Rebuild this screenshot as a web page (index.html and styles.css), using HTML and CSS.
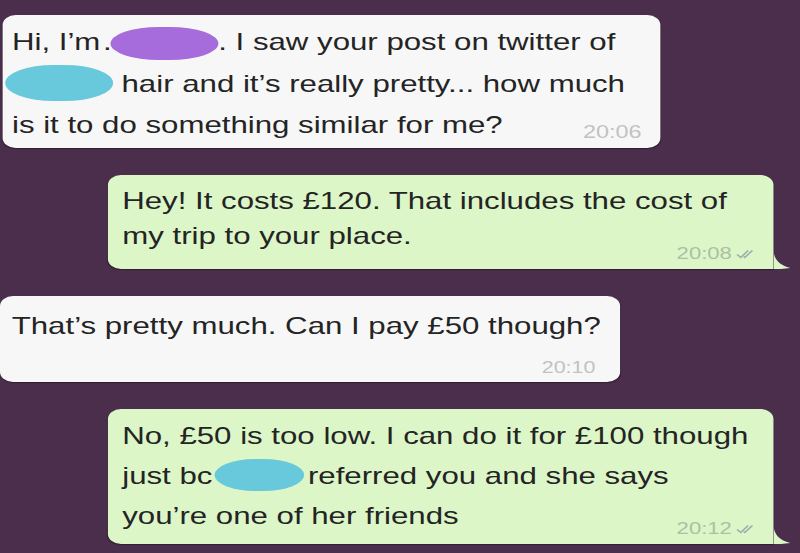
FILE: index.html
```html
<!DOCTYPE html>
<html>
<head>
	<meta charset="utf-8">
	<meta name="viewport" content="width=device-width, initial-scale=1.0">
	<link rel="stylesheet" href="styles.css">
<title>Chat</title>
</head>
<body>
	<div class="chat">
		<div class="row">
			<div class="bubble in b1">
				<p class="msg">Hi, I’m<span class="nudge">.</span><span class="blot purple"></span>. I saw your post on twitter of<br><span class="blot cyan lead"></span> hair and it’s really pretty... how much<br>is it to do something similar for me?</p>
				<span class="time">20:06</span>
			</div>
		</div>

		<div class="row out">
			<div class="bubble out b2">
				<p class="msg">Hey! It costs £120. That includes the cost of<br>my trip to your place.</p>
				<span class="time">20:08
					<svg class="ticks" viewBox="0 0 14 10" width="14" height="10"><path d="M1 5.5 L3.8 8.5 L9.5 1.5 M6 7.6 L6.9 8.5 L12.8 1.5"/></svg>
				</span>
			</div>
		</div>

		<div class="row">
			<div class="bubble in b3">
				<p class="msg">That’s pretty much. Can I pay £50 though?</p>
				<span class="time">20:10</span>
			</div>
		</div>

		<div class="row out">
			<div class="bubble out b4">
				<p class="msg">No, £50 is too low. I can do it for £100 though<br>just bc<span class="blot cyan mid"></span>referred you and she says<br>you’re one of her friends</p>
				<span class="time">20:12
					<svg class="ticks" viewBox="0 0 14 10" width="14" height="10"><path d="M1 5.5 L3.8 8.5 L9.5 1.5 M6 7.6 L6.9 8.5 L12.8 1.5"/></svg>
				</span>
			</div>
		</div>
	</div>
</body>
</html>
```

FILE: styles.css
```css
	body {
		margin: 0;
		height: 553px;
		overflow: hidden;
		background-color: #4a2e4c;
		font-family: "Liberation Sans", Arial, sans-serif;
		color: #242424;
	}

	/* the screenshot is stretched sideways, so the whole chat is too */
	.chat {
		width: 616px;
		display: flex;
		flex-direction: column;
		gap: 27px;
		padding-top: 15px;
		transform: scaleX(1.3);
		transform-origin: 0 0;
	}

	.row {
		display: flex;
	}
	.row.out {
		padding-left: 83px;
	}

	.bubble {
		position: relative;
		box-sizing: border-box;
		border-radius: 10px;
		box-shadow: 0 1px 1px rgba(0, 0, 0, 0.35);
	}
	.bubble.in {
		background-color: #f7f7f7;
	}
	.bubble.out {
		width: 512px;
		background-color: #dcf6c8;
		border-bottom-right-radius: 0;
	}
	.bubble.out::after {
		content: "";
		position: absolute;
		right: -13px;
		bottom: 0;
		width: 13px;
		height: 20px;
		background: inherit;
		clip-path: path("M0 0 C0 10 4 16 13 19 C8 20 3 20 0 20 Z");
	}

	.msg {
		margin: 0;
		font-size: 24px;
	}

	.b1 {
		width: 506px;
		margin-left: 1.5px;
		padding: 6px 0 2.5px 7.7px;
	}
	.b1 .msg {
		line-height: 41.5px;
	}

	.b2 {
		padding: 7.7px 0 16.3px 11px;
	}
	.b2 .msg {
		line-height: 35px;
	}

	.b3 {
		width: 477px;
		height: 86px;
		padding: 12.7px 0 0 9px;
	}
	.b3 .msg {
		line-height: 34px;
	}

	.b4 {
		padding: 6.7px 0 8.3px 11px;
	}
	.b4 .msg {
		line-height: 40px;
	}

	.time {
		position: absolute;
		right: 14px;
		bottom: 7px;
		display: flex;
		align-items: center;
		gap: 3px;
		font-size: 18px;
		line-height: 18px;
		color: #c2c2c2;
	}
	.out .time {
		right: 15px;
		bottom: 6px;
		font-size: 17px;
		color: #aebfa6;
	}
	.b3 .time {
		right: 19px;
		bottom: 6px;
		font-size: 16.5px;
	}

	.ticks path {
		fill: none;
		stroke: #a0aeaa;
		stroke-width: 1.3;
	}

	.nudge {
		margin-left: 2px;
	}

	.blot {
		display: inline-block;
		border-radius: 45% / 50%;
	}
	.purple {
		width: 83px;
		height: 33px;
		margin-left: -1px;
		vertical-align: -10px;
		background-color: #a66cdc;
	}
	.cyan {
		background-color: #68c9dc;
	}
	.cyan.lead {
		width: 83px;
		height: 36px;
		margin-left: -5.4px;
		vertical-align: -9px;
	}
	.cyan.mid {
		width: 69px;
		height: 32px;
		margin: 0 2.5px 0 2px;
		vertical-align: -7px;
	}
```
